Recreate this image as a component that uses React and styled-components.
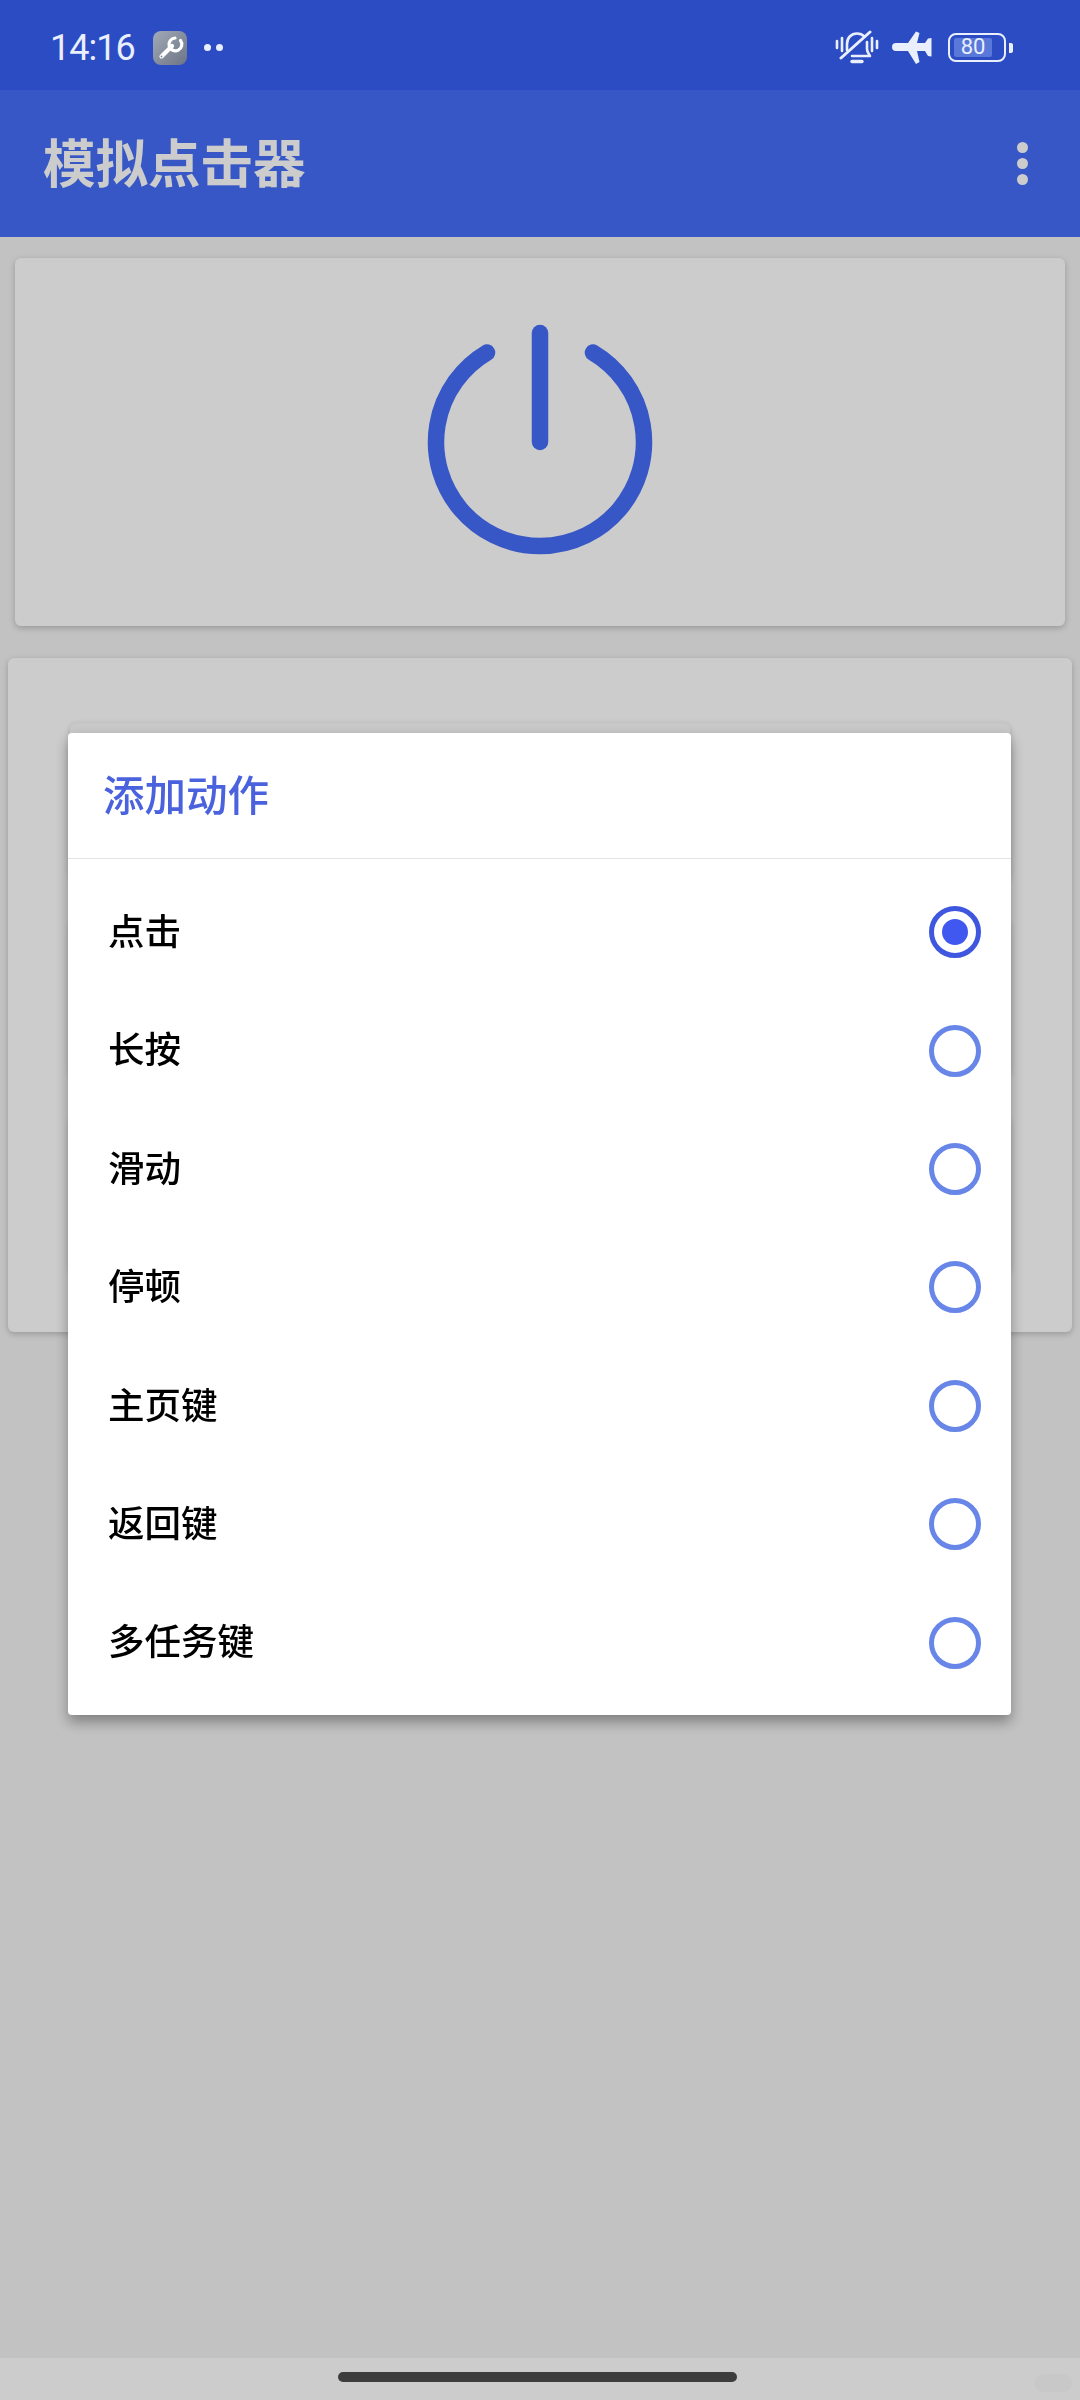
import React from 'react'
import styled, { createGlobalStyle } from 'styled-components'

const ACTIONS = ['点击', '长按', '滑动', '停顿', '主页键', '返回键', '多任务键']

const GlobalStyle = createGlobalStyle`
  html, body {
    margin: 0;
    padding: 0;
    background: #f3f3f3;
  }
  * {
    box-sizing: border-box;
  }
  body {
    font-family: 'Noto Sans CJK SC', 'Noto Sans', sans-serif;
  }
`

const Page = styled.div`
  width: 1080px;
  height: 2400px;
  display: flex;
  flex-direction: column;
  overflow: hidden;
  background: #f3f3f3;
`

const StatusBar = styled.header`
  position: relative;
  z-index: 3;
  height: 90px;
  flex: none;
  display: flex;
  align-items: center;
  justify-content: space-between;
  padding: 5px 67px 0 50px;
  background: #2c4cc4;
  color: #e9effd;
`

const StatusGroup = styled.div`
  display: flex;
  align-items: center;
`

const Clock = styled.span`
  font-family: Roboto, sans-serif;
  font-size: 36px;
  line-height: 1;
  width: 85px;
  margin-right: 18px;
  letter-spacing: -1px;
`

const ToolBadge = styled.div`
  width: 34px;
  height: 34px;
  border-radius: 8px;
  background: linear-gradient(135deg, #a2a9b8, #6d7585);
  margin-right: 17px;
`

const NoticeDots = styled.div`
  display: flex;
  gap: 5px;
`

const NoticeDot = styled.i`
  width: 7px;
  height: 7px;
  border-radius: 50%;
  background: #e9effd;
`

const PlaneWrap = styled.div`
  display: flex;
  margin-left: 13px;
`

const BatteryWrap = styled.div`
  display: flex;
  align-items: center;
  gap: 3px;
  margin-left: 16px;
`

const BatteryBody = styled.div`
  width: 58px;
  height: 29px;
  border: 2.5px solid #e9effd;
  border-radius: 8px;
  padding: 3px 4px;
  display: flex;
`

const BatteryLevel = styled.div`
  width: 38px;
  border-radius: 2px;
  background: #5a78da;
  font-family: Roboto, sans-serif;
  font-size: 22px;
  line-height: 18px;
  text-align: center;
  white-space: nowrap;
`

const BatteryNub = styled.div`
  width: 4px;
  height: 10px;
  border-radius: 0 2px 2px 0;
  background: #e9effd;
`

const AppBar = styled.div`
  height: 147px;
  flex: none;
  display: flex;
  align-items: center;
  justify-content: space-between;
  padding: 0 52px 0 43px;
  background: #466df8;
  color: #fff;
`

const Title = styled.h1`
  margin: 0 0 6px;
  font-size: 52.5px;
  font-weight: 700;
  line-height: 1;
`

const Overflow = styled.div`
  display: flex;
  flex-direction: column;
  gap: 5px;
`

const OverflowDot = styled.i`
  width: 11px;
  height: 11px;
  border-radius: 50%;
  background: #fff;
`

const Main = styled.main`
  flex: 1;
  display: flex;
  flex-direction: column;
  gap: 32px;
  padding: 21px 8px 0;
`

const PowerCard = styled.section`
  height: 368px;
  margin: 0 7px;
  display: flex;
  justify-content: center;
  align-items: center;
  border-radius: 6px;
  background: #fff;
  box-shadow: 0 2px 6px rgba(0, 0, 0, 0.22);
`

const ListCard = styled.section`
  height: 674px;
  padding: 65px 62px 60px;
  display: flex;
  flex-direction: column;
  gap: 40px;
  border-radius: 6px;
  background: #fff;
  box-shadow: 0 2px 6px rgba(0, 0, 0, 0.22);
`

const ActionCard = styled.div`
  flex: 1;
  border-radius: 6px;
  background: #fafafa;
  box-shadow: 0 2px 6px rgba(0, 0, 0, 0.2);
`

const NavBar = styled.footer`
  position: relative;
  z-index: 3;
  height: 42px;
  flex: none;
  display: flex;
  justify-content: center;
  padding: 14px 5px 0 0;
  background: #cccccc;
`

const NavPill = styled.div`
  width: 399px;
  height: 10px;
  border-radius: 5px;
  background: #3d3d3d;
`

const Watermark = styled.div`
  position: absolute;
  right: 8px;
  bottom: 8px;
  width: 38px;
  height: 18px;
  border-radius: 9px;
  background: #c8c8c8;
`

const Scrim = styled.div`
  position: fixed;
  inset: 0;
  z-index: 2;
  padding: 733px 69px 0 68px;
  background: rgba(0, 0, 0, 0.2);
`

const Dialog = styled.div`
  border-radius: 4px;
  background: #fff;
  box-shadow: 0 7px 14px rgba(0, 0, 0, 0.35);
`

const DialogHeader = styled.div`
  height: 126px;
  display: flex;
  align-items: center;
  padding: 0 0 4px 35px;
  border-bottom: 1px solid #e4e4e4;
  color: #4a62de;
  font-size: 41.5px;
  font-weight: 500;
  line-height: 1;
`

const Options = styled.div`
  padding: 14px 0 13px;
`

const Option = styled.div`
  height: 118.4px;
  display: flex;
  align-items: center;
  justify-content: space-between;
  padding: 0 30px 0 40px;
`

const OptionLabel = styled.span`
  margin-bottom: 4px;
  color: #000;
  font-size: 36.5px;
  font-weight: 500;
  line-height: 1;
`

const Radio = styled.div`
  width: 52px;
  height: 52px;
  display: flex;
  align-items: center;
  justify-content: center;
  border-radius: 50%;
  border: 5px solid ${(p) => (p.$checked ? '#3f57df' : '#6786e8')};
`

const RadioDot = styled.div`
  width: 26px;
  height: 26px;
  border-radius: 50%;
  background: #4058ef;
`

const PowerIcon = () => (
  <svg width="240" height="250" viewBox="0 0 240 250" fill="none" stroke="#466df8" strokeWidth="16.5" strokeLinecap="round">
    <path d="M120 16V125" />
    <path d="M67 35.6A104 104 0 1 0 173 35.6" />
  </svg>
)

const WrenchIcon = () => (
  <svg width="34" height="34" viewBox="0 0 34 34" fill="none" stroke="#fff" strokeLinecap="round">
    <path d="M8.5 25.5L19 15" strokeWidth="4.2" />
    <path d="M27.5 9.5A6.4 6.4 0 1 1 22 7" strokeWidth="3.2" />
    <circle cx="8.5" cy="25.5" r="0.9" fill="#7c8494" stroke="none" />
  </svg>
)

const SilentIcon = () => (
  <svg width="44" height="36" viewBox="0 0 44 36" fill="none" stroke="#e9effd" strokeWidth="2.6" strokeLinecap="round" strokeLinejoin="round">
    <path d="M2 11V18M7 8V21M37 8V21M42 11V18" />
    <path d="M12 20V14C12 8 16 3.5 22 3.5C25 3.5 27.5 4.5 29.5 6.5" />
    <path d="M32 12V19C32 22 34 24 35 26H17" />
    <path d="M17 31.5H27" strokeWidth="3.4" />
    <path d="M35 2L6 28" strokeWidth="3" />
  </svg>
)

const PlaneIcon = () => (
  <svg width="40" height="34" viewBox="0 0 40 34">
    <path
      fill="#e9effd"
      d="M4 12H16L24 .5L27.5 2L25 12H33L36 7.5L39.5 7V25.5L36 25L33 20H25L27.5 31L24 33L16 20H4Q0 20 0 16T4 12Z"
    />
  </svg>
)

const App = () => {
  return (
    <Page>
      <GlobalStyle />
      <StatusBar>
        <StatusGroup>
          <Clock>14:16</Clock>
          <ToolBadge>
            <WrenchIcon />
          </ToolBadge>
          <NoticeDots>
            <NoticeDot />
            <NoticeDot />
          </NoticeDots>
        </StatusGroup>
        <StatusGroup>
          <SilentIcon />
          <PlaneWrap>
            <PlaneIcon />
          </PlaneWrap>
          <BatteryWrap>
            <BatteryBody>
              <BatteryLevel>80</BatteryLevel>
            </BatteryBody>
            <BatteryNub />
          </BatteryWrap>
        </StatusGroup>
      </StatusBar>
      <AppBar>
        <Title>模拟点击器</Title>
        <Overflow>
          <OverflowDot />
          <OverflowDot />
          <OverflowDot />
        </Overflow>
      </AppBar>
      <Main>
        <PowerCard>
          <PowerIcon />
        </PowerCard>
        <ListCard>
          <ActionCard />
          <ActionCard />
          <ActionCard />
        </ListCard>
      </Main>
      <NavBar>
        <NavPill />
        <Watermark />
      </NavBar>
      <Scrim>
        <Dialog>
          <DialogHeader>添加动作</DialogHeader>
          <Options>
            {ACTIONS.map((name, i) => (
              <Option key={name}>
                <OptionLabel>{name}</OptionLabel>
                <Radio $checked={i === 0}>{i === 0 && <RadioDot />}</Radio>
              </Option>
            ))}
          </Options>
        </Dialog>
      </Scrim>
    </Page>
  )
}

export default App
